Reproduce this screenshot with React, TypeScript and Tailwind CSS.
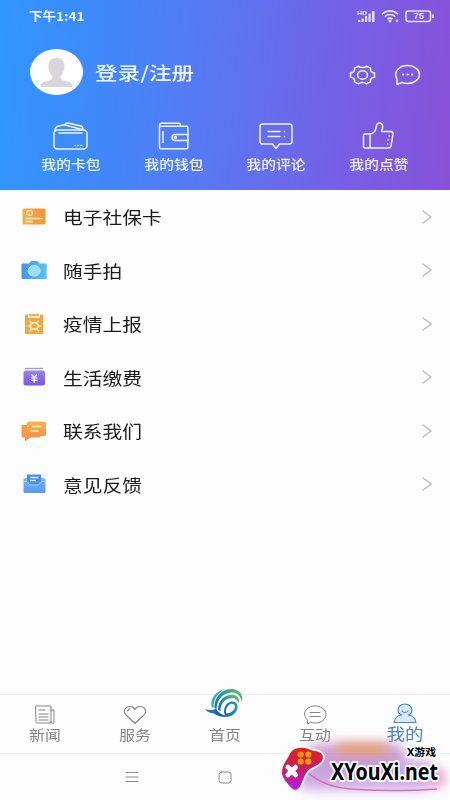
import type { ReactNode } from "react";

const menu = [
  { label: "电子社保卡", icon: <CardIcon /> },
  { label: "随手拍", icon: <CameraIcon /> },
  { label: "疫情上报", icon: <ReportIcon /> },
  { label: "生活缴费", icon: <PayIcon /> },
  { label: "联系我们", icon: <ContactIcon /> },
  { label: "意见反馈", icon: <FeedbackIcon /> },
];

const shortcuts = [
  { label: "我的卡包", icon: <CardsIcon /> },
  { label: "我的钱包", icon: <WalletIcon /> },
  { label: "我的评论", icon: <CommentIcon /> },
  { label: "我的点赞", icon: <LikeIcon /> },
];

function Line({ w, h, children, className = "" }: { w: number; h: number; children: ReactNode; className?: string }) {
  return (
    <svg
      width={w}
      height={h}
      viewBox={`0 0 ${w} ${h}`}
      fill="none"
      stroke="currentColor"
      strokeWidth="1.5"
      strokeLinecap="round"
      strokeLinejoin="round"
      className={className}
    >
      {children}
    </svg>
  );
}

function CardsIcon() {
  return (
    <Line w={36} h={28}>
      <rect x="1" y="8" width="33" height="19" rx="3.5" />
      <path d="M2 8.500C2 5 4 4.500 6 4l5-1.300L29 7.500M11 3l2-1.700c.6-.5 1.300-.5 2-.3l13 3c1.500.4 2 1.500 2 3.500M6 11h23" />
      <path d="M22 23.500h.5M25 23.500h.5M28 23.500h.5" />
    </Line>
  );
}

function WalletIcon() {
  return (
    <Line w={32} h={28}>
      <path d="M1.500 3v22.500c0 .8.400 1.200 1.200 1.200h26c.8 0 1.200-.4 1.200-1.200V5.500c0-.8-.4-1.200-1.200-1.200H3C2 4.300 1.500 3.800 1.500 3S2 1.200 3 1.200h18c1 0 1.500.5 1.500 3" />
      <path d="M5 9.500v11M30 12.500H17a3 3 0 0 0 0 6h13" />
      <circle cx="17.500" cy="15.500" r="1" />
    </Line>
  );
}

function CommentIcon() {
  return (
    <Line w={34} h={28}>
      <path d="M4 2h26c1.800 0 3 1 3 2.500v15c0 1.500-1.200 2.500-3 2.500H20.500L17 26.500 13.500 22H4c-1.800 0-3-1-3-2.500v-15C1 3 2.200 2 4 2ZM9 9.500h12M9 14.500h12M25.500 9.500v.3M25.500 14.500v.3" />
    </Line>
  );
}

function LikeIcon() {
  return (
    <Line w={34} h={28}>
      <path d="M8 12H3c-1 0-1.500.5-1.500 1.500v11c0 1 .5 1.500 1.500 1.500h5V12c4-.5 5.500-3 6-6 .2-3 1-5 3.500-5 3 0 3.500 3 3 5l-1 3.500h9c2 0 2.700 1 2.500 2.500l-2 12c-.3 1.500-1 2-2.500 2H8" />
      <path d="M27 14h.3M26 18h.3M25.500 22h.3" />
    </Line>
  );
}

function CardIcon() {
  return (
    <svg width="26" height="22" viewBox="0 0 26 22">
      <defs>
        <linearGradient id="card">
          <stop stopColor="#f7ad4b" />
          <stop offset="1" stopColor="#f39335" />
        </linearGradient>
      </defs>
      <rect x="1.500" y="2.500" width="23" height="16" rx="1.500" fill="url(#card)" />
      <ellipse cx="8.500" cy="7" rx="2.900" ry="2.200" fill="none" stroke="#ffe3ba" strokeWidth="1.400" />
      <path d="M4.500 12.500h17M4.500 15.500h7" stroke="#fff0d8" strokeWidth="1.300" />
    </svg>
  );
}

function CameraIcon() {
  return (
    <svg width="26" height="22" viewBox="0 0 26 22">
      <defs>
        <linearGradient id="camera">
          <stop stopColor="#4395e8" />
          <stop offset="1" stopColor="#57c5f5" />
        </linearGradient>
      </defs>
      <path d="M1.500 4.500H8l2-2.500h6.500l2 2.500h6c.7 0 1.200.4 1.200 1.200v12.800c0 1-.5 1.500-1.500 1.500H2C1 20 .5 19.500.5 18.500V5.700c0-.8.3-1.200 1-1.200Z" fill="url(#camera)" />
      <ellipse cx="13.200" cy="11.800" rx="6" ry="5.400" fill="#9be0f8" stroke="#bceafa" />
    </svg>
  );
}

function ReportIcon() {
  return (
    <svg width="26" height="22" viewBox="0 0 26 22">
      <path d="M5 1.500h2V5h12V1.500h2c.7 0 1 .4 1 1V20c0 .7-.3 1-1 1H5c-.7 0-1-.3-1-1V2.500c0-.6.3-1 1-1Z" fill="#f3a63e" />
      <path d="M8 .8h10v2.700H8Z" fill="#f3b45d" />
      <ellipse cx="13.200" cy="13" rx="3.900" ry="3.300" fill="none" stroke="#fff3dc" strokeWidth="1.600" />
      <path d="M10.500 10 8.500 8M15.500 10l2-2.500M9 13H6.500M20 13h-2.500M10.500 16l-2 2.500M15.800 16l2 2.500" stroke="#fff3dc" strokeWidth="1.400" />
    </svg>
  );
}

function PayIcon() {
  return (
    <svg width="26" height="22" viewBox="0 0 26 22">
      <defs>
        <linearGradient id="pay" x2="0" y2="1">
          <stop stopColor="#9784ee" />
          <stop offset="1" stopColor="#7658e3" />
        </linearGradient>
      </defs>
      <path d="M4 2.500h18" stroke="#a296df" strokeWidth="1.300" />
      <rect x="2.500" y="4.500" width="21.500" height="15" rx="2" fill="url(#pay)" />
      <path d="m10.500 8.500 2.700 3 2.700-3M10 12h6.500M10 14.300h6.500M13.200 11v6" stroke="#fff" strokeWidth="1.200" fill="none" />
    </svg>
  );
}

function ContactIcon() {
  return (
    <svg width="26" height="22" viewBox="0 0 26 22">
      <defs>
        <linearGradient id="contact" x2="0" y2="1">
          <stop stopColor="#f8b64d" />
          <stop offset="1" stopColor="#f58b3c" />
        </linearGradient>
      </defs>
      <path d="M2 5h17v12.500H9l-5 4v-4H2c-1 0-1.500-.5-1.500-1.500V6.500C.5 5.500 1 5 2 5Z" fill="#f59a48" />
      <path d="M8 1.500h15c1.300 0 2 .7 2 2V14c0 1.300-.7 2-2 2H12l-6 3.500V3.500c0-1.300.7-2 2-2Z" fill="url(#contact)" />
      <path d="M11 6.500h9M9.500 11h8" stroke="#fff0c9" strokeWidth="1.500" />
    </svg>
  );
}

function FeedbackIcon() {
  return (
    <svg width="26" height="22" viewBox="0 0 26 22">
      <defs>
        <linearGradient id="feedback" x2="0" y2="1">
          <stop stopColor="#79b7f5" />
          <stop offset="1" stopColor="#5897f0" />
        </linearGradient>
      </defs>
      <path d="M2.500 6 6 4.500h14L24.500 6v12.500c0 1-.5 1.500-1.500 1.500H4c-1 0-1.500-.5-1.500-1.500Z" fill="url(#feedback)" />
      <path d="M6 1.500h14V9l-3 2.500H9L6 9Z" fill="#4d8de3" />
      <path d="M9 4.500h8.500M9 7.500h6" stroke="#d4ecff" strokeWidth="1.300" />
      <path d="M2.500 8.500H6L9 12h8l3-3.500h4.500" stroke="#96cbfa" fill="none" />
    </svg>
  );
}

function StatusIcons() {
  return (
    <svg width="78" height="14" viewBox="0 0 78 14" className="text-[#e7e0fc]">
      <text x="0" y="5.500" fontSize="6" fontWeight="700" fill="currentColor" textLength="10" lengthAdjust="spacingAndGlyphs" fontFamily="Liberation Sans">HD</text>
      <path d="M1 13v-2h2.200v2ZM4.500 13V9.500h2.200V13ZM8 13V7h2.200v6ZM11.500 13V4.500h2.200V13ZM15 13V2h2.500v11Z" fill="currentColor" />
      <g fill="none" stroke="currentColor" strokeWidth="1.600">
        <path d="M25 5.200c4.500-4.500 11.500-4.500 16 0M27.800 7.700c3-3 7.500-3 10.500 0M30.500 10.200c1.500-1.500 3.600-1.500 5 0" />
        <rect x="49" y="2" width="24.500" height="10.500" rx="2.500" />
        <path d="M76 5.500v3.500" strokeWidth="2" />
      </g>
      <circle cx="33" cy="12" r="1.500" fill="currentColor" />
      <circle cx="40" cy="11.800" r="1.500" fill="currentColor" opacity=".7" />
      <text x="56.500" y="10.300" fontSize="8.500" fontWeight="700" fill="currentColor" textLength="10.500" lengthAdjust="spacingAndGlyphs" fontFamily="Liberation Sans">75</text>
    </svg>
  );
}

function SwirlLogo() {
  return (
    <svg width="40" height="32" viewBox="0 0 40 32">
      <defs>
        <linearGradient id="swirl" x1="0" y1="1" x2="1" y2="0">
          <stop stopColor="#1668b0" />
          <stop offset=".5" stopColor="#259a93" />
          <stop offset="1" stopColor="#7dba6c" />
        </linearGradient>
        <linearGradient id="swirlBlue">
          <stop stopColor="#1c8bb8" />
          <stop offset=".5" stopColor="#1a56a6" />
          <stop offset="1" stopColor="#1f9fb4" />
        </linearGradient>
      </defs>
      <path d="M6.500 20C5 11 11 4 20 2 13 6 8.500 11 8.500 21Z" fill="#35aeb0" />
      <path d="M9.500 21C9 8 19 1 28 2c7 .8 10.500 6 9 13.500C36 9 32 5 26.500 5.500 18 6 12 12 11.500 22Z" fill="url(#swirl)" />
      <path d="M13 23C13 13 20 7.500 27 7.700c5.500.2 8 4 7 9-1.500-4-4-6-8-5.500C19 12 15.500 17 15.500 24Z" fill="url(#swirl)" />
      <path d="M0 22c4 1.500 8 1.500 11-.5 2 3.500 5 6 9 7-2.500-6 .5-13 6.500-14 5-.5 7.500 4 5.500 8.500-2.500 5.500-9 8-16 6.500-3-.6-5-1.500-7-3C5 26 2 25 0 22Zm21.500 4.500c4 0 8-3 8.500-6.500.3-2.500-2-4-4.500-3-3.500 1.500-5.500 6-4 9.500Z" fill="url(#swirlBlue)" />
    </svg>
  );
}

function Tab({ label, icon, active = false }: { label: string; icon: ReactNode; active?: boolean }) {
  return (
    <div className={`flex flex-1 flex-col items-center justify-end ${active ? "text-[#4b83c8]" : "text-[#858585]"}`}>
      {icon}
      <span className={active ? "mb-[10px] scale-x-[1.16] text-[16px] leading-[19px]" : "mb-[10px] scale-x-[1.13] text-[14px] leading-[18px]"}>
        {label}
      </span>
    </div>
  );
}

function Watermark() {
  return (
    <div className="absolute right-0 bottom-0 h-[64px] w-[178px]">
      <div className="absolute top-[7px] left-[34px] h-[26px] w-[100px] rounded-full bg-[#b774b8]/65 blur-[6px]" />
      <div className="absolute top-[7px] left-[64px] h-[13px] w-[52px] rounded-full bg-[#eba066]/80 blur-[5px]" />
      <div className="absolute top-[24px] left-[24px] h-[30px] w-[140px] rounded-full bg-[#bd8fdb]/75 blur-[6px]" />
      <div className="absolute right-[4px] bottom-[12px] h-[20px] w-[16px] rounded-full bg-[#e765ab]/50 blur-[5px]" />
      <svg width="178" height="64" viewBox="0 0 178 64" className="absolute inset-0 overflow-visible">
        <defs>
          <linearGradient id="pad" x2="0" y2="1">
            <stop stopColor="#e2231e" />
            <stop offset=".5" stopColor="#c91b66" />
            <stop offset="1" stopColor="#b71bec" />
          </linearGradient>
        </defs>
        <path d="M33 35c12 9 22 16 46 18 30 2 60 2 86 0" fill="none" stroke="#d64e9c" strokeWidth="1.500" opacity=".75" />
        <path d="M20 15c3-3 10-4 15-2.500 3 1 4 2 8 2.500 6 .5 9 4 7.500 8.500-1.500 5-8 6.500-12.500 9.500-4.500 3-6 9-9 15.500-2 5-6 7-9.500 3.500-4-4-9.500-11-9.500-15 0-7 3-10.500 6-15.500 1.500-2.500 2-4.500 4-6.500Z" fill="url(#pad)" stroke="#fff" strokeWidth="3.500" paintOrder="stroke" />
        <g fill="#fa980c">
          <circle cx="28.700" cy="18.500" r="3.100" />
          <circle cx="36.300" cy="18.500" r="3.100" />
          <circle cx="28.700" cy="25.500" r="3.100" />
          <circle cx="36.300" cy="25.500" r="3.100" />
        </g>
        <path d="m15.900 31.200 7.600 7.600m0-7.600-7.600 7.600" stroke="#fff" strokeWidth="5" strokeLinecap="round" />
        <g fontWeight="700" stroke="#fff" strokeLinejoin="round" paintOrder="stroke">
          <text x="135" y="20" fontSize="10.500" strokeWidth="3.500" textLength="29" lengthAdjust="spacingAndGlyphs" fontFamily="'Noto Sans', 'Noto Sans CJK SC', sans-serif">X游戏</text>
          <text x="59" y="44" fontSize="24" strokeWidth="4" textLength="107" lengthAdjust="spacingAndGlyphs" fontFamily="'Noto Sans', sans-serif">XYouXi.net</text>
        </g>
      </svg>
    </div>
  );
}

export default function App() {
  return (
    <div className="relative flex h-[800px] w-[450px] flex-col overflow-hidden bg-[#fdfdfd] font-['Noto_Sans_CJK_SC',sans-serif]">
      <header className="h-[190px] bg-[linear-gradient(94deg,#3096ff_0%,#3f89fb_22%,#5b76f1_50%,#7560e6_75%,#8852d8_100%)] text-[#eef4ff]">
        <div className="flex h-8 items-center justify-between pr-[15px] pl-[29px]">
          <span className="origin-left scale-x-[1.13] text-[12px] font-bold">下午1:41</span>
          <StatusIcons />
        </div>

        <div className="flex h-[80px] items-center pl-[30px]">
          <svg width="53" height="46" viewBox="0 0 53 46">
            <ellipse cx="26.500" cy="23" rx="26.500" ry="23" fill="#fff" />
            <path d="M26.500 9c5 0 8 3 8 8 0 6-2 8-4 10 0 3 1 4 5 5 5 1 7 2 7 6h-32c0-4 2-5 7-6 4-1 5-2 5-5-2-2-4-4-4-10 0-5 3-8 8-8Z" fill="#d8d5dc" />
          </svg>
          <span className="ml-[12px] origin-left scale-x-[1.22] text-[18.500px] leading-none font-medium">登录/注册</span>
          <div className="mt-[6px] mr-[29px] ml-auto flex gap-[18px]">
            <Line w={27} h={22}>
              <path d="M9.500 2.200c1.600 1.700 6.400 1.700 8 0l4 2c-.6 2.600 1.200 4.500 4 4.600v4.400c-2.800.1-4.600 2-4 4.600l-4 2c-1.600-1.700-6.400-1.700-8 0l-4-2c.6-2.600-1.200-4.500-4-4.600V8.800c2.800-.1 4.600-2 4-4.600Z" />
              <ellipse cx="13.500" cy="11" rx="5" ry="4.300" />
            </Line>
            <Line w={27} h={22}>
              <path d="M3 20.500V15C-1 8 5 1.500 13.500 1.500c6.500 0 12 4 12 9s-5.500 9-12 9c-2 0-4-.3-5.500-1Z" />
              <path d="M9 10.500h.3M13.500 10.500h.3M18 10.500h.3" strokeWidth="2" />
            </Line>
          </div>
        </div>

        <div className="flex px-[20px] pt-[10px]">
          {shortcuts.map((item) => (
            <div key={item.label} className="flex flex-1 flex-col items-center">
              {item.icon}
              <span className="mt-[4px] scale-x-[1.140] text-[13px] leading-[20px] font-medium">{item.label}</span>
            </div>
          ))}
        </div>
      </header>

      <main className="flex-1">
        {menu.map((item) => (
          <div key={item.label} className="flex h-[53.500px] items-center pr-[18px] pl-[21px]">
            {item.icon}
            <span className="ml-[16px] origin-left scale-x-[1.160] text-[17px] leading-none text-[#1a1a1a]">{item.label}</span>
            <Line w={10} h={14} className="ml-auto text-[#bbb]">
              <path d="M1 1l8 6-8 6" />
            </Line>
          </div>
        ))}
      </main>

      <nav className="flex h-[59px] border-t border-[#eee]">
        <Tab
          label="新闻"
          icon={
            <Line w={20} h={20}>
              <path d="M1 1h15v17H2c-.7 0-1-.3-1-1ZM16 5h3v12c0 1-.5 1.500-1.500 1.500S16 18 16 17M4 5h6M4 9h9M4 12h9M4 15h9" strokeWidth="1" />
            </Line>
          }
        />
        <Tab
          label="服务"
          icon={
            <Line w={24} h={20}>
              <path d="M12 18.500 3 10C-1 5.500 3 1.500 7 1.500c2.300 0 4 1 5 3 1-2 2.700-3 5-3 4 0 8 4 4 8.500ZM4.500 6c.3-1.200 1.200-2 2.500-2" strokeWidth="1.100" />
            </Line>
          }
        />
        <Tab label="首页" icon={<div className="mb-[6px]"><SwirlLogo /></div>} />
        <Tab
          label="互动"
          icon={
            <Line w={24} h={20}>
              <path d="M4.500 18.500V15C-2 9 3 1 12 1c6.500 0 11 3.700 11 8.500S18.500 18 12 18c-1.500 0-3-.2-4-.6ZM7 7.500h10M7 11.500h10" strokeWidth="1" />
            </Line>
          }
        />
        <Tab
          active
          label="我的"
          icon={
            <Line w={24} h={21}>
              <ellipse cx="12" cy="7" rx="7" ry="6" fill="#d9eafd" strokeWidth="1.200" />
              <path d="M8.500 12c-4 .7-7 3-7.500 7.500h22c-.5-4.500-3.500-6.800-7.500-7.500M9 8c1.500 2 4.500 2 6 0" fill="#d9eafd" strokeWidth="1.200" />
            </Line>
          }
        />
      </nav>

      <footer className="flex h-[47px] border-t border-[#eee] text-[#888]">
        <div className="flex w-[264px] items-center justify-center">
          <Line w={14} h={12}>
            <path d="M1 1.500h12M1 6h12M1 10.500h12" strokeWidth="1" />
          </Line>
        </div>
        <div className="-ml-[46px] flex items-center">
          <Line w={14} h={13}>
            <rect x="1" y="1" width="12" height="11" rx="2.500" strokeWidth="1" />
          </Line>
        </div>
      </footer>
      <Watermark />
    </div>
  );
}
